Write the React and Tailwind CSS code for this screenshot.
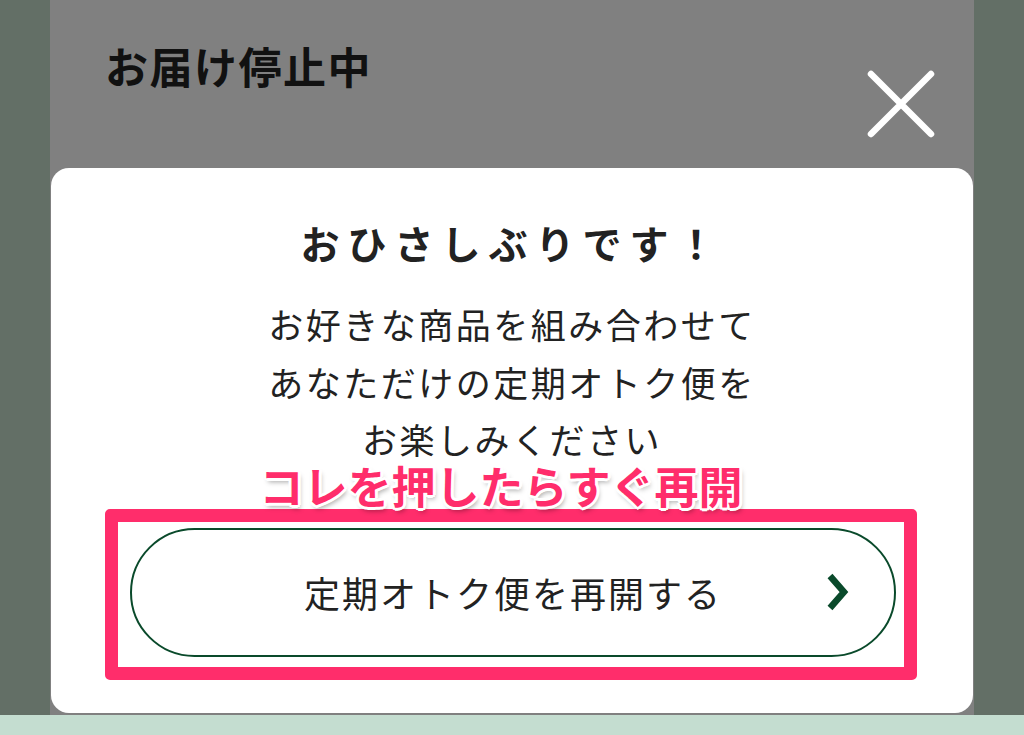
import React from 'react';

const jp = { fontFamily: '"Noto Sans CJK JP", "Noto Sans", sans-serif' };

const CloseIcon = () => (
  <svg width="68" height="68" viewBox="0 0 68 68" fill="none">
    <path d="M4 4 L64 64 M64 4 L4 64" stroke="#fff" strokeWidth="6.5" strokeLinecap="round" />
  </svg>
);

const Chevron = () => (
  <svg width="24" height="40" viewBox="0 0 24 40" fill="none">
    <polyline points="5,4 19,20 5,36" stroke="#0a4a2b" strokeWidth="6.5" strokeLinejoin="miter" />
  </svg>
);

const App = () => {
  return (
    <div className="w-[1024px] h-[735px] flex flex-col overflow-hidden" style={jp}>
      <div className="flex h-[715px]">
        <div className="w-[50px] bg-[#636f66]"></div>

        <div className="flex-1 flex flex-col bg-[#808080]">
          {/* header */}
          <div className="h-[168px] flex items-start justify-between pl-[55px] pr-[39px]">
            <h1 className="pt-[44px] text-[43px] leading-none font-bold tracking-[1.5px] text-[#111]">
              お届け停止中
            </h1>
            <div className="mt-[70px]">
              <CloseIcon />
            </div>
          </div>

          {/* card */}
          <div className="mx-[1px] h-[545px] bg-white rounded-[18px] flex flex-col items-center pt-[52px]">
            <h2 className="text-[39px] leading-[44px] font-bold tracking-[8px] text-[#222]">
              おひさしぶりです！
            </h2>
            <p className="mt-[31px] text-center text-[35px] leading-[57.5px] tracking-[2.5px] text-[#222]">
              お好きな商品を組み合わせて
              <br />
              あなただけの定期オトク便を
              <br />
              お楽しみください
            </p>

            <div className="relative self-stretch ml-[54px] mr-[56px] mt-[41px] border-[13px] border-[#ff2d6b] rounded-[5px] pl-[12px] pr-[8px] pt-[6px] pb-[10px]">
              <div className="absolute inset-x-0 bottom-full mb-[15px] pr-[20px] text-center text-[44px] leading-none font-bold text-[#ff2d6b] [text-shadow:2px_2px_0_#fff,-2px_-2px_0_#fff,2px_-2px_0_#fff,-2px_2px_0_#fff,0_3px_0_#fff,0_-3px_0_#fff,3px_0_0_#fff,-3px_0_0_#fff,2px_4px_5px_rgba(0,0,0,0.35)]">
                コレを押したらすぐ再開
              </div>
              <button className="relative w-full h-[129px] rounded-full border-2 border-[#0a4a2b] bg-white flex items-center justify-center text-[36px] tracking-[2px] text-[#222]">
                定期オトク便を再開する
                <span className="absolute right-[45px] top-1/2 -translate-y-1/2 flex">
                  <Chevron />
                </span>
              </button>
            </div>
          </div>
        </div>

        <div className="w-[50px] bg-[#636f66]"></div>
      </div>
      <div className="h-[20px] bg-[#c4ddd0]"></div>
    </div>
  );
};

export default App;
